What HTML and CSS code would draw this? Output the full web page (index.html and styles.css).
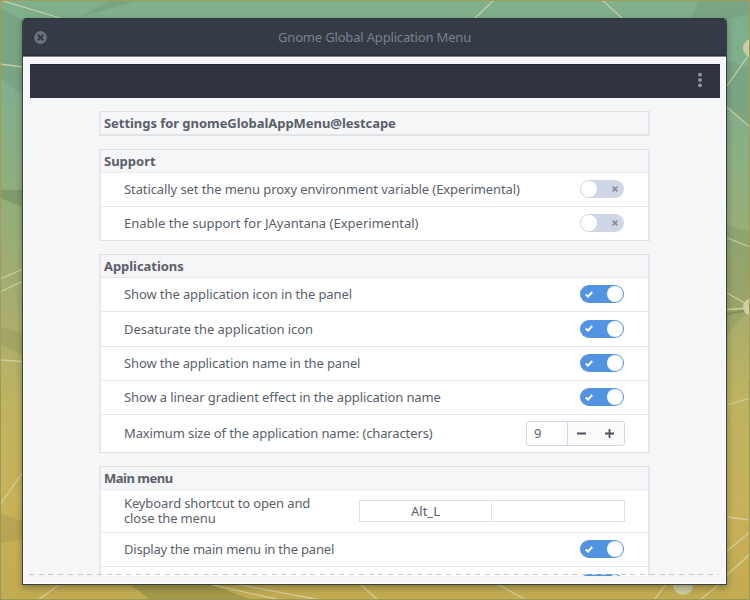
FILE: index.html
```
<!DOCTYPE html>
<html lang="en">
<head>
<meta charset="utf-8">
<title>Gnome Global Application Menu</title>
<link rel="stylesheet" href="styles.css">
</head>
<body>
<div class="desktop">
<svg class="wallpaper" viewBox="0 0 750 600" width="750" height="600" aria-hidden="true">
  <g fill="#425b34" fill-opacity=".11">
    <path d="M0 8L23 20V95L0 78zM78 18L110 0H140zM690 18L700 0H750V14L727 20zM727 60L750 68V125L727 108z"/>
    <path d="M0 326L23 334V355L0 345zM0 514L23 521V539L0 543z"/>
    <path d="M727 225L750 232V310L727 334z"/>
  </g>
  <path d="M0 190H23V207L0 198zM130 584L150 600H252L210 584zM727 313L750 309V311L727 315z" fill="#425b34" fill-opacity=".24"/>
  <g fill="none" stroke="#d7d7aa" stroke-width="1.3" stroke-opacity=".8">
    <path d="M0 0L60 18M0 64L23 67M0 279L23 269M0 292L23 281M0 360L23 361.500M0 505L23 472M475 18L494 0M602 0L622 18M727 86L750 53M727 107L750 127M727 238L750 247M727 293L750 306M727 309.500L750 308M727 405L750 398M727 517L750 520M727 551L750 532M727 575L750 554M38 600L60 584M209 584L280 600M236 584L320 600M360 584L378 600M497 584L526 600M654 600L666 584M700 600L720 584"/>
  </g>
  <g fill="#cdcda0"><circle cx="752" cy="48" r="9"/><circle cx="752" cy="307" r="9"/><circle cx="683" cy="585" r="10"/></g>
  <path d="M0 .5H750" stroke="#a79b58"/><path d="M.5 0V380M749.500 0V380" stroke="#a59a5a"/><path d="M.5 380V600M749.500 380V600M0 599.500H750" stroke="#98985b"/>
</svg>
<main class="window">
  <header class="titlebar">
    <svg class="close" viewBox="0 0 12 12" width="13" height="13"><circle cx="6" cy="6" r="5.900" fill="#6c737e"/><path d="M3.500 3.500L8.500 8.500M8.500 3.500L3.500 8.500" stroke="#343943" stroke-width="1.800"/></svg>
    <h1 class="title">Gnome Global Application Menu</h1>
  </header>
  <div class="client">
    <div class="toolbar"><svg viewBox="0 0 4 16" width="4" height="16" fill="#9095a0"><circle cx="2" cy="2.700" r="1.900"/><circle cx="2" cy="8" r="1.900"/><circle cx="2" cy="13.300" r="1.900"/></svg></div>
    <div class="viewport">
      <section class="card heading"><h2><span class="t1">Settings for gnomeGlobalAppMenu@lestcape</span></h2></section>
      <section class="card">
        <h2><span>Support</span></h2>
        <div class="row"><span class="t3">Statically set the menu proxy environment variable (Experimental)</span><i class="switch"><svg viewBox="0 0 6 6"><path d="M.6.6L5.400 5.400M5.400.6L.6 5.400"/></svg></i></div>
        <div class="row"><span class="t4">Enable the support for JAyantana (Experimental)</span><i class="switch"><svg viewBox="0 0 6 6"><path d="M.6.6L5.400 5.400M5.400.6L.6 5.400"/></svg></i></div>
      </section>
      <section class="card">
        <h2><span class="t1">Applications</span></h2>
        <div class="row"><span class="t6">Show the application icon in the panel</span><i class="switch on"><svg viewBox="0 0 8 7"><path d="M.8 3.500L3 5.600L7.200 1"/></svg></i></div>
        <div class="row tall"><span class="t7">Desaturate the application icon</span><i class="switch on"><svg viewBox="0 0 8 7"><path d="M.8 3.500L3 5.600L7.200 1"/></svg></i></div>
        <div class="row"><span class="t8">Show the application name in the panel</span><i class="switch on"><svg viewBox="0 0 8 7"><path d="M.8 3.500L3 5.600L7.200 1"/></svg></i></div>
        <div class="row"><span class="t6">Show a linear gradient effect in the application name</span><i class="switch on"><svg viewBox="0 0 8 7"><path d="M.8 3.500L3 5.600L7.200 1"/></svg></i></div>
        <div class="row number"><span class="t8">Maximum size of the application name: (characters)</span>
          <div class="spin"><span class="value">9</span><svg viewBox="0 0 56 23" width="56" height="23"><path d="M9 11.500H18M37 11.500H46M41.500 7V16" stroke="#4d525e" stroke-width="1.800"/></svg></div></div>
      </section>
      <section class="card">
        <h2><span class="t11">Main menu</span></h2>
        <div class="row shortcut"><p class="lines t8">Keyboard shortcut to open and close the menu</p>
          <div class="keys"><span>Alt_L</span><span></span></div></div>
        <div class="row"><span class="t14">Display the main menu in the panel</span><i class="switch on"><svg viewBox="0 0 8 7"><path d="M.8 3.500L3 5.600L7.200 1"/></svg></i></div>
        <div class="row"><span></span><i class="switch on"></i></div>
      </section>
    </div>
    <div class="more"></div>
  </div>
</main>
</div>
</body>
</html>
```
FILE: styles.css
```
* { box-sizing: border-box; }
body { margin: 0; font-family: "Noto Sans", sans-serif; font-size: 13px; color: #5a5f6a; }
.desktop { position: relative; width: 750px; height: 600px; overflow: hidden; padding: 18px 23px 0 22px; background: linear-gradient(#80af8c 0, #80af8c 90px, #92ae7b 200px, #a5ad70 300px, #beb360 400px, #c7b159 500px, #c3ab52 600px); }
.wallpaper { position: absolute; left: 0; top: 0; }
.window { position: relative; height: 567px; border: 1px solid #39433d; border-top: 0; border-radius: 4px 4px 0 0; background: #f5f6f7; box-shadow: 0 3px 7px rgba(0,0,0,.3); overflow: hidden; }
.titlebar { height: 39px; background: linear-gradient(#2c343a 0, #363c47 2px, #343b46 36px, #2b2e39 37px, #2b2e39 38px, #837f89 38px); position: relative; display: flex; align-items: center; justify-content: center; }
.close { position: absolute; left: 10.5px; top: 12.8px; }
.title { margin: 0 0 1px; font-size: 13px; font-weight: 400; color: #7c828e; white-space: nowrap; letter-spacing: -.17px; }
.client { height: 527px; padding: 6px 6px 0; border: 1px solid #fff; position: relative; }
.toolbar { height: 34px; margin-right: -1px; background: #30333f; border-top: 1px solid #242832; display: flex; justify-content: flex-end; align-items: center; padding: 0 18px 3px 0; }
.viewport { height: 478px; overflow: hidden; padding: 13px 0 0 69px; }
.card { width: 551px; margin-bottom: 13px; border: 1px solid #dfe1e3; border-left: 2px solid #e7e8eb; border-right: 2px solid #e7e8eb; background: #fff; }
.card h2 { display: flex; align-items: center; margin: 0; height: 23px; padding: 0 0 1px 3px; font-size: 13px; background: #f5f6f7; border-bottom: 1px solid #e9eaec; white-space: nowrap; }
.heading h2 { border-bottom-color: #e4e5e7; }
.row { height: 34px; display: flex; justify-content: space-between; align-items: center; padding: 0 24px 1px 23px; border-bottom: 1px solid #e7e8ea; white-space: nowrap; }
.row:last-child { border-bottom: 0; height: 33px; }
.row.tall { height: 35px; }
.row.number:last-child { height: 37px; }
.row.shortcut { height: 43px; }
.lines { margin: 0; width: 210px; line-height: 15px; white-space: normal; }
.t1, .t7 { letter-spacing: -.05px; }
.t3 { letter-spacing: -.09px; }
.t4 { letter-spacing: .01px; }
.t6 { letter-spacing: -.1px; }
.t8 { letter-spacing: -.125px; }
.t11 { letter-spacing: -.5px; }
.t14 { letter-spacing: -.19px; }
.switch { width: 44px; height: 18px; border-radius: 9px; background: #cfd6e6; display: flex; align-items: center; justify-content: space-between; padding: 0 6px 0 1px; }
.switch::before { content: ""; width: 16px; height: 16px; border-radius: 50%; background: #fff; }
.switch svg { width: 6px; height: 6px; fill: none; stroke: #858b9b; stroke-width: 1.5; }
.switch.on { background: #5294e2; flex-direction: row-reverse; padding: 0 1px 0 5px; }
.switch.on svg { width: 8px; height: 7px; stroke: #fff; stroke-width: 1.9; }
.spin { width: 99px; height: 25px; margin-right: -1px; border: 1px solid #d2d7e6; border-radius: 3px; display: flex; background: #fbfbfc; }
.value { width: 41px; background: #fff; border-right: 1px solid #d2d7e6; border-radius: 3px 0 0 3px; padding-left: 7px; line-height: 23px; }
.keys { width: 266px; height: 22px; margin-right: -1px; border: 1px solid #dfe1e3; display: grid; grid-template-columns: 131px 1fr; line-height: 21px; text-align: center; }
.keys span + span { border-left: 1px solid #e7e8ea; }
.more { position: absolute; left: 5px; right: 6px; top: 516px; height: 1px; background: repeating-linear-gradient(90deg, #c5c7c9 0, #c5c7c9 5px, transparent 5px, transparent 9.7px); }
```
